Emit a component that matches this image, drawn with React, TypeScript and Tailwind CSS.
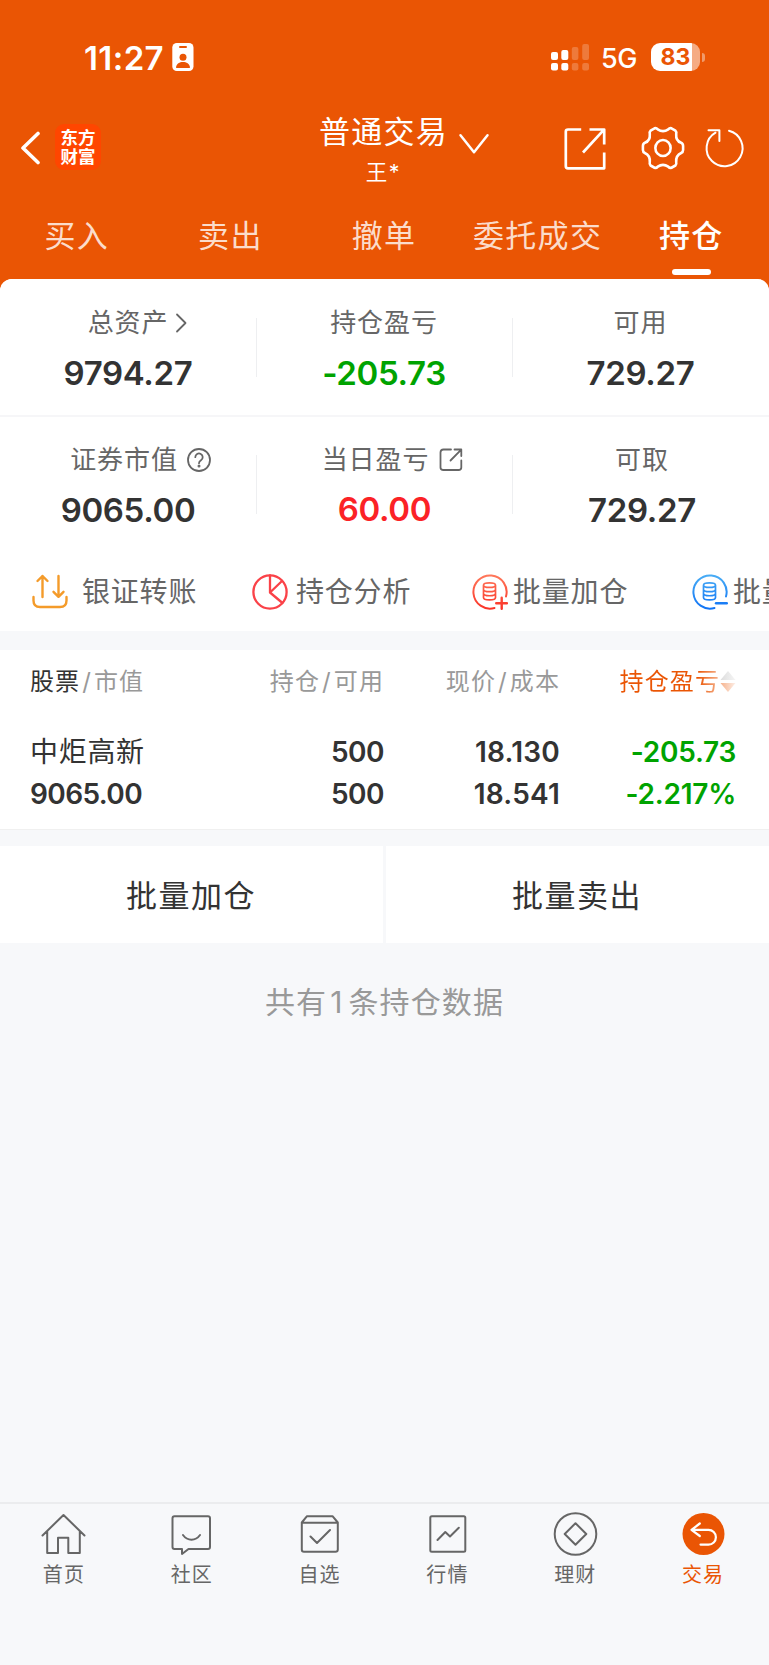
import React from "react";

const stroke = (color: string, width: number) => ({
  fill: "none",
  stroke: color,
  strokeWidth: width,
  strokeLinecap: "round" as const,
  strokeLinejoin: "round" as const,
});

function StatusBar() {
  return (
    <div className="flex h-[114px] items-center pl-[84px] text-white">
      <span className="mt-px w-[88px] text-[33px] font-semibold leading-[40px] tracking-[0.400px]">11:27</span>
      <svg width="22" height="28" viewBox="0 0 22 28">
        <rect x="0.3" y="0" width="21.2" height="28" rx="4.5" fill="#fff" />
        <rect x="7" y="3" width="8" height="2" rx="1" fill="#ea5504" />
        <circle cx="11" cy="14.3" r="3.5" fill="#ea5504" />
        <path d="M4 24.2c.6-3.4 3.400-5.200 7-5.200s6.400 1.800 7 5.200c0 .6-.4.800-1 .8H5c-.6 0-1-.2-1-.8z" fill="#ea5504" />
      </svg>
      <svg className="ml-[357px]" width="39" height="28" viewBox="0 0 39 28" fill="#fff">
        <rect x="0" y="9" width="7" height="8" rx="2" />
        <rect x="10.300" y="7" width="7" height="10" rx="2" />
        <rect x="20.800" y="4" width="6.600" height="13" rx="2" opacity=".22" />
        <rect x="31.200" y="1" width="6.800" height="16" rx="2" opacity=".22" />
        <rect x="0" y="20" width="7" height="7.500" rx="2" />
        <rect x="10.300" y="20" width="7" height="7.500" rx="2" />
        <rect x="20.800" y="20" width="6.600" height="7.500" rx="2" opacity=".22" />
        <rect x="31.200" y="20" width="6.800" height="7.500" rx="2" opacity=".22" />
      </svg>
      <span className="ml-[11px] mt-[3px] w-[50px] text-[27px] font-medium leading-[32px] tracking-[-0.5px]">5G</span>
      <div className="flex h-[28px] w-[49px] items-center justify-center rounded-[9px] bg-[linear-gradient(90deg,#fff_83%,#f5ab83_83%)] text-[23px] font-bold leading-[28px] text-[#ea5504]">
        83
      </div>
      <div className="ml-[2px] h-[9px] w-[3px] rounded-r-full bg-[#f09a6b]" />
    </div>
  );
}

function TitleBar() {
  return (
    <div className="flex h-[84px] items-start">
      <svg className="ml-[20px] mt-[17px]" width="22" height="34" viewBox="0 0 22 34" {...stroke("#fff", 3.6)}>
        <path d="M18 2.500L3 17l15 14.500" />
      </svg>
      <div className="ml-[13px] mt-[10px] flex h-[46px] w-[46px] items-center justify-center rounded-[9px] bg-[#ff4600] font-['Noto_Sans_CJK_SC'] text-[17.500px] font-bold leading-[19px] text-white">
        <span className="-mt-[2px]">东方<br />财富</span>
      </div>
      <div className="ml-[217px] flex w-[131px] flex-col items-center text-white">
        <span className="whitespace-nowrap text-[31px] leading-[36px] tracking-[1.300px]">普通交易</span>
        <span className="mt-[10px] text-[21.500px] leading-[24px] tracking-[1.500px]">王*</span>
      </div>
      <svg className="ml-[9px] mt-[19px]" width="32" height="22" viewBox="0 0 32 22" {...stroke("#fff", 2.500)}>
        <path d="M2.500 2.200L16 19.300 29.500 2.200" />
      </svg>
      <svg className="ml-[73px] mt-[13px]" width="44" height="44" viewBox="0 0 44 44" {...stroke("#fff", 2.700)} strokeLinecap="butt">
        <path d="M18.200 2.500H5Q2.800 2.500 2.800 4.700V39.300Q2.800 41.300 5 41.300H41.200V25.500M26.500 2.500H41.200V17.500M41 2.700L20 25.500" />
      </svg>
      <svg className="ml-[34px] mt-[12px]" width="44" height="44" viewBox="0 0 46 44" preserveAspectRatio="none" {...stroke("#fff", 2.700)}>
        <path d="M14.200 2.300 Q16 1.800 17.500 3.300 Q23 7 28.500 3.300 Q30 1.800 31.800 2.300 L36 4.700 Q37.400 6 36.800 8 Q36.200 14.800 42 16.800 Q44 17.600 44 20 V24 Q44 26.200 42 27 Q36.200 29.500 36.800 36 Q37.400 38.200 36 39.500 L31.800 41.700 Q30 42.200 28.500 40.700 Q23 37 17.500 40.700 Q16 42.200 14.200 41.700 L10 39.500 Q8.600 38.200 9.200 36 Q9.800 29.500 4 27 Q2 26.200 2 24 V20 Q2 17.600 4 16.800 Q9.800 14.800 9.200 8 Q8.600 6 10 4.700 Z" />
        <circle cx="23" cy="22" r="8" />
      </svg>
      <svg className="ml-[19px] mt-[14px]" width="42" height="42" viewBox="0 0 42 42" {...stroke("#fff", 2)}>
        <path d="M25 2.800A18 18 0 1 1 11.500 4.700M4.500 2.300H15.400V13" />
      </svg>
    </div>
  );
}

const tabs = ["买入", "卖出", "撤单", "委托成交", "持仓"];

function Tabs() {
  return (
    <div className="grid h-[81px] grid-cols-5 pr-px">
      {tabs.map((t) => {
        const active = t === "持仓";
        return (
          <div key={t} className="flex flex-col items-center pt-[18px]">
            <span
              className={
                active
                  ? "whitespace-nowrap text-[31px] font-medium leading-[40px] tracking-[1.300px] text-white"
                  : "whitespace-nowrap text-[31px] leading-[40px] tracking-[1.300px] text-[#fbdccb]"
              }
            >
              {t}
            </span>
            {active && <span className="mt-[13px] h-[6px] w-[39px] rounded-full bg-white" />}
          </div>
        );
      })}
    </div>
  );
}

interface StatProps {
  label: string;
  value: string;
  icon?: React.ReactNode;
  tone?: string;
  shift?: string;
  gap?: string;
}

function Stat({ label, value, icon, tone = "text-[#333]", shift = "", gap = "mt-[13px]" }: StatProps) {
  return (
    <div className={`flex flex-col items-center ${shift}`}>
      <div className="flex h-[36px] items-center text-[#666]">
        <span className="text-[26px] leading-[36px] tracking-[0.9px]">{label}</span>
        {icon}
      </div>
      <span className={`${gap} text-[33px] font-semibold leading-[38px] tracking-[-0.350px] ${tone}`}>{value}</span>
    </div>
  );
}

const Divider = () => <div className="mt-[13px] h-[59px] w-px bg-[#eeeff1]" />;

function Summary() {
  return (
    <div className="bg-white">
      <div className="grid h-[138px] grid-cols-[256px_1px_255px_1px_255px] border-b-2 border-[#f6f6f8] pt-[26px]">
        <Stat
          label="总资产"
          value="9794.27"
          icon={
            <svg className="-mr-[19px] ml-[7px]" width="12" height="20" viewBox="0 0 12 20" {...stroke("#666", 1.800)}>
              <path d="M2 1.500L10.500 10 2 18.500" />
            </svg>
          }
        />
        <Divider />
        <Stat label="持仓盈亏" value="-205.73" tone="text-[#00a300]" shift="pr-px" />
        <Divider />
        <Stat label="可用" value="729.27" />
      </div>
      <div className="grid h-[132px] grid-cols-[256px_1px_255px_1px_255px] pt-[25px]">
        <Stat
          label="证券市值"
          value="9065.00"
          icon={
            <svg className="-mr-[26px] ml-[8px]" width="26" height="26" viewBox="0 0 26 26" {...stroke("#666", 1.800)}>
              <circle cx="13" cy="13" r="11" />
              <path d="M9.300 10.200a3.700 3.700 0 1 1 5.700 3.100c-1.300.9-2 1.500-2 2.900" />
              <circle cx="13" cy="19" r="0.6" fill="#666" />
            </svg>
          }
        />
        <Divider />
        <Stat
          label="当日盈亏"
          value="60.00"
          tone="text-[#fb2226]"
          gap="mt-[12px]"
          icon={
            <svg className="-mr-[16px] ml-[10px]" width="24" height="24" viewBox="0 0 24 24" {...stroke("#666", 1.800)}>
              <path d="M12 1.500H4.500Q1.500 1.500 1.500 4.500V19.500Q1.500 22 4.500 22H19.500Q22.300 22 22.300 19.500V12.500M15.500 1.500H22.300V8M22 1.800L11.500 12.500" />
            </svg>
          }
        />
        <Divider />
        <Stat label="可取" value="729.27" shift="pl-[3px]" />
      </div>
    </div>
  );
}

function TransferIcon() {
  return (
    <svg width="36" height="36" viewBox="0 0 36 36" {...stroke("#f49b2a", 2.400)}>
      <path d="M1.500 23v3.500q0 6.500 6.500 6.500h20q6.500 0 6.500-6.500V23M10.500 23V2M5.500 7l5-5 5 5M26.500 2v20.500M21.500 17.800l5 5 5-5" />
    </svg>
  );
}

function PieIcon() {
  return (
    <svg width="36" height="36" viewBox="0 0 36 36" {...stroke("#fa4248", 2.300)}>
      <circle cx="18" cy="18" r="16.600" />
      <path d="M18 1.500V18.500L30.500 29M18 18.500L30 7" />
    </svg>
  );
}

function CoinIcon({ from, to, plus }: { from: string; to: string; plus: boolean }) {
  const id = plus ? "coin-add" : "coin-sub";
  return (
    <svg width="36" height="36" viewBox="0 0 36 36" {...stroke(`url(#${id})`, 2)}>
      <defs>
        <linearGradient id={id} gradientUnits="userSpaceOnUse" x1="0" y1="0" x2="0" y2="36">
          <stop offset="0" stopColor={from} />
          <stop offset="1" stopColor={to} />
        </linearGradient>
      </defs>
      <path d="M34 22.500A16.600 16.600 0 1 0 22.500 34" />
      <path strokeWidth="1.700" d="M11.500 11.200c0-3 12-3 12 0s-12 3-12 0v12.300c0 3.200 12 3.200 12 0V11.200M11.500 15.400c0 3 12 3 12 0M11.500 19.500c0 3 12 3 12 0" />
      <path strokeWidth="2.400" d={plus ? "M24.200 29.300H35M29.700 23.800V34.800" : "M24 29.200H34.800"} />
    </svg>
  );
}

function Actions() {
  const label = "whitespace-nowrap text-[28px] leading-[36px] tracking-[0.800px] text-[#666]";
  return (
    <div className="flex h-[82px] items-center overflow-hidden bg-white pl-[32px] pt-[4px]">
      <div className="flex w-[220px] shrink-0 items-center gap-[14px]"><TransferIcon /><span className={label}>银证转账</span></div>
      <div className="flex w-[220px] shrink-0 items-center gap-[8px]"><PieIcon /><span className={label}>持仓分析</span></div>
      <div className="flex w-[220px] shrink-0 items-center gap-[5px]"><CoinIcon from="#ff7a5c" to="#fa3226" plus /><span className={label}>批量加仓</span></div>
      <div className="flex w-[220px] shrink-0 items-center gap-[5px]"><CoinIcon from="#4aaef5" to="#0f72f5" plus={false} /><span className={label}>批量卖出</span></div>
    </div>
  );
}

function Holdings() {
  const head = "text-[24px] leading-[32px] tracking-[1.100px]";
  const cell = "-mt-px flex flex-col items-end text-[28px] font-semibold leading-[42px]";
  const slash = <span className="mx-[2px]">/</span>;
  return (
    <div className="h-[180px] border-b border-[#f0f0f0] bg-white pl-[30px]">
      <div className="grid h-[82px] grid-cols-[150px_204px_176px_176px] pt-[16px] text-[#999]">
        <div className={head}>
          <span className="text-[#333]">股票</span>{slash}市值
        </div>
        <div className={`${head} text-right`}>持仓{slash}可用</div>
        <div className={`${head} text-right`}>现价{slash}成本</div>
        <div className={`${head} flex justify-end`}>
          <span className="bg-[linear-gradient(90deg,#ea5504_78%,#f6b794_100%)] bg-clip-text text-transparent">持仓盈亏</span>
          <svg className="mt-[5px]" width="16" height="22" viewBox="0 0 16 22">
            <defs>
              <linearGradient id="sort-up"><stop stopColor="#ddd" /><stop offset="1" stopColor="#f5f5f5" /></linearGradient>
              <linearGradient id="sort-down"><stop stopColor="#f6b28c" /><stop offset="1" stopColor="#fdeee6" /></linearGradient>
            </defs>
            <path d="M0.500 9L8 0l7.500 9z" fill="url(#sort-up)" />
            <path d="M0.500 12L8 21l7.500-9z" fill="url(#sort-down)" />
          </svg>
        </div>
      </div>
      <div className="grid grid-cols-[150px_204px_176px_176px] text-[#333]">
        <div className="-mt-px flex flex-col text-[28px] leading-[42px]">
          <span className="tracking-[0.700px]">中炬高新</span>
          <span className="font-semibold tracking-[-0.600px]">9065.00</span>
        </div>
        <div className={`${cell} tracking-[-0.500px]`}><span>500</span><span>500</span></div>
        <div className={`${cell} tracking-[0.200px]`}><span>18.130</span><span>18.541</span></div>
        <div className={`${cell} tracking-[-0.250px] text-[#00a300]`}><span>-205.73</span><span>-2.217%</span></div>
      </div>
    </div>
  );
}

const navIcons: Record<string, React.ReactNode> = {
  首页: <path d="M1.500 23.500L22.500 3l21 20.500M6.200 19.500V41H17V25.800H27.300V41H38.800V19.500" />,
  社区: <path d="M5.500 4.200H39Q41 4.200 41 6.200V35Q41 37 39 37H19.500L13 42V37H5.500Q3.500 37 3.500 35V6.200Q3.500 4.200 5.500 4.200M14 23c4.500 6.300 12.500 6.300 17 0" />,
  自选: <path d="M4.800 10.500L10 4.200H35.500L40.800 10.500V37.500Q40.800 39.800 38.500 39.800H7Q4.800 39.800 4.800 37.500ZM4.800 10.800H40.800M13.500 24.500L20 31 33 18" />,
  行情: <path d="M6.800 4.200H38.800Q40.300 4.200 40.300 5.700V38.200Q40.300 39.700 38.800 39.700H6.800Q5.300 39.700 5.300 38.200V5.700Q5.300 4.200 6.800 4.200M12.500 28L20.300 20 25 24.500 33.800 15.700" />,
  理财: <path d="M43.300 22A20.800 20.800 0 1 1 1.700 22A20.800 20.800 0 1 1 43.300 22ZM22.500 11.200L33.300 22 22.500 32.800 11.700 22Z" />,
};

function BottomNav() {
  const label = "mt-[4px] text-[20px] leading-[30px] tracking-[1.100px]";
  return (
    <div className="grid h-[163px] grid-cols-6 border-t-2 border-[#ebecee] bg-[#f7f8fa] pr-[2px] pt-[8px]">
      {Object.entries(navIcons).map(([name, icon]) => (
        <div key={name} className="flex flex-col items-center text-[#666]">
          <svg width="45" height="44" viewBox="0 0 45 44" {...stroke("#666", 2)}>{icon}</svg>
          <span className={label}>{name}</span>
        </div>
      ))}
      <div className="flex flex-col items-center text-[#ea5504]">
        <svg width="45" height="44" viewBox="0 0 45 44" {...stroke("#fff", 2.200)}>
          <circle cx="22.500" cy="22" r="21" fill="#ea5504" stroke="none" />
          <path d="M18.800 11.500L10.500 17.800l8.300 6.200M10.500 17.800H27.500a7.400 7.400 0 0 1 0 14.800H19.500" />
        </svg>
        <span className={label}>交易</span>
      </div>
    </div>
  );
}

export default function App() {
  const button = "flex h-[97px] items-center justify-center bg-white pr-px pt-[2px] text-[31px] leading-[40px] tracking-[1.500px] text-[#333]";
  return (
    <div className="flex h-[1665px] w-[769px] flex-col overflow-hidden bg-[#f7f8fa] font-['Inter','Noto_Sans_CJK_SC',sans-serif]">
      <header className="bg-[#ea5504]">
        <StatusBar />
        <TitleBar />
        <Tabs />
        <div className="h-[12px] rounded-t-[12px] bg-white" />
      </header>
      <div className="-mt-[12px] overflow-hidden rounded-t-[12px]">
        <Summary />
      </div>
      <Actions />
      <div className="mt-[19px]"><Holdings /></div>
      <div className="mt-[16px] grid grid-cols-[383px_383px] gap-[3px]">
        <div className={button}>批量加仓</div>
        <div className={button}>批量卖出</div>
      </div>
      <div className="mt-[39px] text-center text-[30px] leading-[40px] tracking-[1.100px] text-[#999]">
        共有<span className="ml-[3px] mr-[5px]">1</span>条持仓数据
      </div>
      <div className="mt-auto"><BottomNav /></div>
    </div>
  );
}
